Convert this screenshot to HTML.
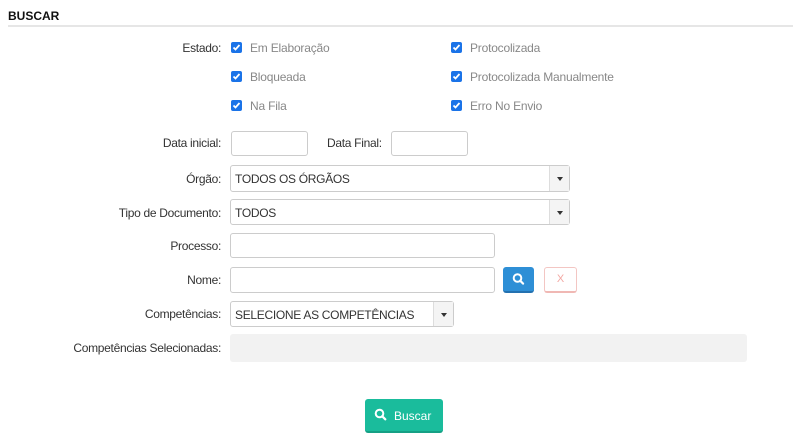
<!DOCTYPE html>
<html><head><meta charset="utf-8"><style>
*{box-sizing:border-box;margin:0;padding:0}
body{width:800px;height:443px;background:#fff;font-family:"Liberation Sans",sans-serif;font-size:12px;color:#333;position:relative;overflow:hidden}
.a{position:absolute}
.lbl{position:absolute;right:579px;text-align:right;white-space:nowrap;letter-spacing:-0.3px}
.cb{position:absolute;width:11px;height:11px;background:#1a73e8;border-radius:2px}
.cb svg{position:absolute;left:1px;top:1px}
.ct{position:absolute;color:#888;letter-spacing:-0.2px;white-space:nowrap}
.in{position:absolute;border:1px solid #ccc;border-radius:3px;background:#fff}
.sel{position:absolute;border:1px solid #ccc;border-radius:3px;background:#fff;padding-left:4px;line-height:26px;letter-spacing:-0.3px}
.arr{position:absolute;right:0;top:0;bottom:0;width:20px;background:#f4f4f4;border-left:1px solid #ddd}
.arr:after{content:"";position:absolute;left:7px;top:11px;border-left:3px solid transparent;border-right:3px solid transparent;border-top:4px solid #333}
</style></head><body>
<div class="a" style="left:8px;top:9px;font-weight:bold;font-size:12px;color:#111">BUSCAR</div>
<div class="a" style="left:8px;top:25px;width:785px;height:2px;background:#e6e6e6"></div>

<div class="lbl" style="top:41px">Estado:</div>
<div class="cb" style="left:231px;top:42px"><svg width="9" height="9"><path d="M1.5 4.5l2 2 4-4.5" stroke="#fff" stroke-width="1.8" fill="none"/></svg></div>
<div class="ct" style="left:250px;top:41px">Em Elaboração</div>
<div class="cb" style="left:231px;top:71px"><svg width="9" height="9"><path d="M1.5 4.5l2 2 4-4.5" stroke="#fff" stroke-width="1.8" fill="none"/></svg></div>
<div class="ct" style="left:250px;top:70px">Bloqueada</div>
<div class="cb" style="left:231px;top:100px"><svg width="9" height="9"><path d="M1.5 4.5l2 2 4-4.5" stroke="#fff" stroke-width="1.8" fill="none"/></svg></div>
<div class="ct" style="left:250px;top:99px">Na Fila</div>
<div class="cb" style="left:451px;top:42px"><svg width="9" height="9"><path d="M1.5 4.5l2 2 4-4.5" stroke="#fff" stroke-width="1.8" fill="none"/></svg></div>
<div class="ct" style="left:470px;top:41px">Protocolizada</div>
<div class="cb" style="left:451px;top:71px"><svg width="9" height="9"><path d="M1.5 4.5l2 2 4-4.5" stroke="#fff" stroke-width="1.8" fill="none"/></svg></div>
<div class="ct" style="left:470px;top:70px">Protocolizada Manualmente</div>
<div class="cb" style="left:451px;top:100px"><svg width="9" height="9"><path d="M1.5 4.5l2 2 4-4.5" stroke="#fff" stroke-width="1.8" fill="none"/></svg></div>
<div class="ct" style="left:470px;top:99px">Erro No Envio</div>

<div class="lbl" style="top:136px">Data inicial:</div>
<div class="in" style="left:231px;top:131px;width:77px;height:25px"></div>
<div class="a" style="left:327px;top:136px;letter-spacing:-0.3px">Data Final:</div>
<div class="in" style="left:391px;top:131px;width:77px;height:25px"></div>

<div class="lbl" style="top:172px">Órgão:</div>
<div class="sel" style="left:230px;top:165px;width:340px;height:27px">TODOS OS ÓRGÃOS<div class="arr"></div></div>

<div class="lbl" style="top:206px">Tipo de Documento:</div>
<div class="sel" style="left:230px;top:199px;width:340px;height:26px">TODOS<div class="arr"></div></div>

<div class="lbl" style="top:239px">Processo:</div>
<div class="in" style="left:230px;top:233px;width:265px;height:25px"></div>

<div class="lbl" style="top:273px">Nome:</div>
<div class="in" style="left:230px;top:267px;width:265px;height:26px"></div>
<div class="a" style="left:503px;top:267px;width:31px;height:26px;background:#2e8fd6;border-radius:3px;border-bottom:2px solid #2371b0"><svg width="31" height="24"><circle cx="14.5" cy="11" r="3.8" stroke="#fff" stroke-width="2" fill="none"/><path d="M17.3 13.8l2.8 2.8" stroke="#fff" stroke-width="2.2" stroke-linecap="round"/></svg></div>
<div class="a" style="left:544px;top:267px;width:33px;height:26px;border:1px solid #f3c6c3;border-bottom:2px solid #f0b8b4;border-radius:3px;color:#f3a8a3;text-align:center;line-height:22px;font-size:11px">X</div>

<div class="lbl" style="top:307px">Competências:</div>
<div class="sel" style="left:230px;top:301px;width:224px;height:26px">SELECIONE AS COMPETÊNCIAS<div class="arr"></div></div>

<div class="lbl" style="top:341px">Competências Selecionadas:</div>
<div class="a" style="left:230px;top:334px;width:517px;height:28px;background:#f2f2f2;border-radius:3px"></div>

<div class="a" style="left:365px;top:399px;width:78px;height:34px;background:#1abc9c;border-radius:3px;border-bottom:2px solid #16a085;color:#fff;font-size:12px">
<svg class="a" style="left:9px;top:9px" width="14" height="14"><circle cx="5.5" cy="5.5" r="3.8" stroke="#fff" stroke-width="2" fill="none"/><path d="M8.3 8.3l3 3" stroke="#fff" stroke-width="2.2" stroke-linecap="round"/></svg>
<span class="a" style="left:29px;top:10px">Buscar</span></div>
</body></html>
